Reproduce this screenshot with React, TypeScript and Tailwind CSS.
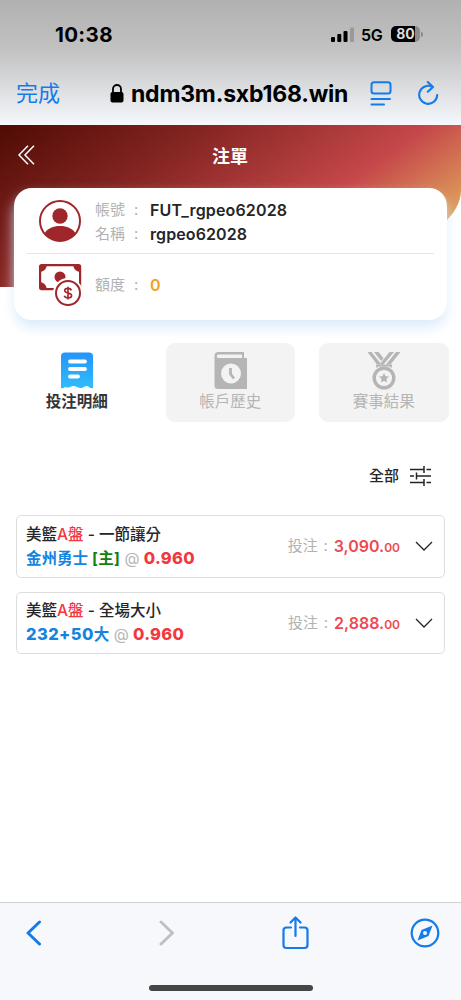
import React from "react";

type Bet = {
  play: string;
  pick: string;
  side?: string;
  home?: boolean;
  odds: string;
  amount: string;
  cents: string;
};

const bets: Bet[] = [
  {
    play: "一節讓分",
    pick: "",
    side: "金州勇士",
    home: true,
    odds: "0.960",
    amount: "3,090.",
    cents: "00",
  },
  {
    play: "全場大小",
    pick: "232+50",
    side: "大",
    odds: "0.960",
    amount: "2,888.",
    cents: "00",
  },
];

const StatusBar = () => (
  <div className="flex h-[68px] items-center justify-between pl-[55px] pr-[38px]">
    <span className="pt-[2px] text-[20.5px] leading-none font-bold tracking-[0.35px]">
      10:38
    </span>
    <div className="flex items-center">
      <svg width="24" height="15" viewBox="0 0 24 15">
        <rect x="0" y="10" width="4" height="5" rx="1" />
        <rect x="6.3" y="7" width="4" height="8" rx="1" />
        <rect x="12.5" y="4" width="4" height="11" rx="1" />
        <rect x="19" y="0.5" width="4" height="14.5" rx="1" fill="#999" />
      </svg>
      <span className="ml-[6px] w-[23px] pt-px text-[16px] leading-none font-semibold tracking-[-0.2px]">
        5G
      </span>
      <div className="ml-[7px] flex h-4 w-[29px] items-center justify-center rounded-[5px] bg-linear-to-r from-black from-82% to-[#8b8b8b] to-82% text-[14px] leading-none font-bold text-[#ddd]">
        80
      </div>
      <div className="ml-px h-[5px] w-[2px] rounded-r bg-[#8b8b8b]" />
    </div>
  </div>
);

const AddressBar = () => (
  <div className="flex h-[57px] items-center pb-[7px] pl-4 text-[#147bea]">
    <span className="w-[94px] text-[22px] leading-none">完成</span>
    <svg width="14" height="19" viewBox="0 0 14 19" className="text-black">
      <rect x="0.5" y="8" width="13" height="10.5" rx="2" fill="currentColor" />
      <path
        d="M3 9V5a4 4 0 0 1 8 0v4"
        fill="none"
        stroke="currentColor"
        strokeWidth="1.8"
      />
    </svg>
    <span className="ml-[7px] w-[218px] pt-[2px] text-[23px] leading-none font-bold tracking-[-0.2px] whitespace-nowrap text-black">
      ndm3m.sxb168.win
    </span>
    <svg
      width="22"
      height="25"
      viewBox="0 0 22 25"
      fill="none"
      stroke="currentColor"
      strokeWidth="2"
      strokeLinecap="round"
      className="ml-[21px]"
    >
      <rect x="1.5" y="1.2" width="19" height="11.3" rx="2.5" />
      <path d="M1.5 18h18.5M1.5 23.5h12.5" />
    </svg>
    <svg
      width="22"
      height="26"
      viewBox="0 0 22 26"
      fill="none"
      stroke="currentColor"
      strokeWidth="2.1"
      strokeLinecap="round"
      strokeLinejoin="round"
      className="ml-[26px]"
    >
      <path d="M14.5 6.9A9 9 0 1 0 19.2 15M9.8 2l5.2 5-5.2 4.7" />
    </svg>
  </div>
);

const UserIcon = () => (
  <svg width="42" height="42" viewBox="0 0 42 42" fill="#9f262a">
    <circle cx="21" cy="21" r="20" fill="none" stroke="#9f262a" strokeWidth="2" />
    <circle cx="21" cy="16" r="7.7" />
    <path d="M5.5 33.5C8 28.5 14 26 21 26s13 2.5 15.5 7.5A20 20 0 0 1 5.5 33.5Z" />
  </svg>
);

const MoneyIcon = () => (
  <svg width="43" height="42" viewBox="0 0 43 42" fill="#9f262a">
    <rect x="1.1" y="1.1" width="40" height="24" rx="1.5" fill="white" stroke="#9f262a" strokeWidth="2.2" />
    <path d="M1 1h7q-1 6-7 7zM41 1h-7q1 6 7 7zM1 25h7q-1-6-7-7z" />
    <circle cx="21" cy="13" r="5.5" />
    <circle cx="29" cy="29" r="15" fill="white" />
    <circle cx="29" cy="29" r="12" fill="white" stroke="#9f262a" strokeWidth="2" />
    <path
      d="M32.5 26.4c-.6-1.4-1.9-2-3.5-2-2 0-3.3.8-3.3 2.200 0 3.300 6.900 1.600 6.900 4.900 0 1.600-1.500 2.400-3.500 2.400-1.900 0-3.300-.7-3.800-2.200M29 22.800v12.800"
      fill="none"
      stroke="#9f262a"
      strokeWidth="1.6"
    />
  </svg>
);

const BetIcon = () => (
  <svg width="34" height="37" viewBox="0 0 34 37">
    <defs>
      <linearGradient id="bet" x1="0" y1="0" x2="0" y2="1">
        <stop offset="0" stopColor="#2494fa" />
        <stop offset="1" stopColor="#30bdfb" />
      </linearGradient>
    </defs>
    <path
      d="M5 .5h24a4 4 0 0 1 4 4V36q-2 1-4-1-2.500-2-5 0-3.500 2-7 0-3.500-2-7 0-2.500 1-5 0-2 2-4 1V4.500a4 4 0 0 1 4-4Z"
      fill="url(#bet)"
    />
    <path
      d="M10 9.5h15M10 17h15M10 24.5h8"
      stroke="white"
      strokeWidth="3.8"
      strokeLinecap="round"
    />
  </svg>
);

const HistoryIcon = () => (
  <svg width="34" height="37" viewBox="0 0 34 37" fill="#b5b5b5">
    <path d="M4.5 0H30v6h3v31H4a3.5 3.5 0 0 1-3.500-3.500V4a4 4 0 0 1 4-4Z" />
    <path d="M4.5 2.5H28V6H4.5a1.7 1.7 0 0 1 0-3.500Z" fill="#f3f3f3" />
    <circle cx="17" cy="21.5" r="10" fill="#f3f3f3" />
    <path d="M16.5 16v6l3.5 4.5" fill="none" stroke="#b5b5b5" strokeWidth="2.8" />
  </svg>
);

const MedalIcon = () => (
  <svg width="34" height="38" viewBox="0 0 34 38" fill="#b5b5b5">
    <path d="M.5 0h4l10 12.500h-4.500ZM7 0h4.500l5 6.300-2.300 2.800ZM29 0h4.500L23.500 12.500h-4.500ZM22.500 0h4.500L16.500 12.500H12.500Z" />
    <path
      d="M10 15.5V13.5h14v2"
      fill="none"
      stroke="#b5b5b5"
      strokeWidth="1.8"
    />
    <circle cx="17" cy="26" r="9.8" fill="none" stroke="#b5b5b5" strokeWidth="3.4" />
    <path d="M17 21l1.500 3.200 3.500.4-2.600 2.400.7 3.500-3.100-1.700-3.100 1.700.7-3.500-2.600-2.400 3.500-.4Z" />
  </svg>
);

const tabs = [
  { label: "投注明細", icon: <BetIcon />, active: true },
  { label: "帳戶歷史", icon: <HistoryIcon />, active: false },
  { label: "賽事結果", icon: <MedalIcon />, active: false },
];

const AccountCard = () => (
  <div className="relative mx-[14px] -mt-[99px] h-[132px] rounded-[18px] bg-white px-[13px] text-[15px] shadow-[0_8px_14px_-1px_#d8eafc]">
    <div className="flex h-[66px] items-center border-b border-[#e4e4e6] pt-px pl-3">
      <UserIcon />
      <div className="ml-[14px] pt-px leading-6 text-[#b2b2b2]">
        <div className="flex">
          <span className="w-[33px]">帳號</span>
          <span className="w-[22px] pl-[6px]">:</span>
          <span className="text-[16px] font-semibold tracking-[0.15px] text-[#252528]">
            FUT_rgpeo62028
          </span>
        </div>
        <div className="flex">
          <span className="w-[33px]">名稱</span>
          <span className="w-[22px] pl-[6px]">:</span>
          <span className="text-[16px] font-semibold tracking-[0.1px] text-[#252528]">
            rgpeo62028
          </span>
        </div>
      </div>
    </div>
    <div className="flex h-[62px] items-center pl-3 text-[#b2b2b2]">
      <MoneyIcon />
      <span className="ml-[13px] w-[33px] pt-px">額度</span>
      <span className="w-[22px] pl-[6px]">:</span>
      <span className="text-[16px] font-semibold text-[#f1a11f]">0</span>
    </div>
  </div>
);

const BetRow = ({ bet }: { bet: Bet }) => (
  <div className="flex h-[62.5px] items-center justify-between rounded-[5px] border border-[#dedee0] pr-[11px] pl-[9px]">
    <div className="pt-px text-[15.5px] leading-6 font-medium whitespace-nowrap text-[#252528]">
      <div>
        美籃<span className="text-[#f2383e]">A盤</span> - {bet.play}
      </div>
      <div className="-mt-px font-bold">
        <span className="text-[16.5px] font-extrabold tracking-[0.4px] text-[#1584df]">
          {bet.pick}
        </span>
        <span className="text-[#1584df]">{bet.side}</span>
        {bet.home && (
          <span className="tracking-[0.3px] text-[#128012]"> [主]</span>
        )}
        <span className="font-normal text-[#b5b5b5]"> @ </span>
        <span className="text-[16.5px] font-extrabold tracking-[0.3px] text-[#f2383e]">
          {bet.odds}
        </span>
      </div>
    </div>
    <div className="flex items-center text-[15px] text-[#b2b2b2]">
      <span>投注</span>
      <span className="w-[16px] text-center">:</span>
      <span className="text-[16px] font-semibold text-[#ee4a4e]">
        {bet.amount}
        <span className="text-[12px]">{bet.cents}</span>
      </span>
      <svg
        width="18"
        height="10"
        viewBox="0 0 18 10"
        fill="none"
        stroke="#252528"
        strokeWidth="1.3"
        className="ml-[15px]"
      >
        <path d="M1 1l8 8 8-8" />
      </svg>
    </div>
  </div>
);

const Toolbar = () => (
  <div className="h-[98px] border-t border-[#cfd1d4] bg-[#f6f8fb] text-[#147bea]">
    <div className="flex h-[60px] items-center pl-[25px]">
      <svg width="17" height="26" viewBox="0 0 17 26" fill="none" stroke="currentColor" strokeWidth="3" strokeLinecap="round" strokeLinejoin="round">
        <path d="M14.5 2L3 13l11.5 11" />
      </svg>
      <svg width="17" height="26" viewBox="0 0 17 26" fill="none" stroke="#bfc0c2" strokeWidth="3" strokeLinecap="round" strokeLinejoin="round" className="ml-[117px]">
        <path d="M2 2l11.5 11L2 24" />
      </svg>
      <svg width="27" height="34" viewBox="0 0 27 34" fill="none" stroke="currentColor" strokeWidth="2.2" strokeLinecap="round" strokeLinejoin="round" className="ml-[106px]">
        <path d="M9 11.5H4.5a3 3 0 0 0-3 3V29a3 3 0 0 0 3 3h18a3 3 0 0 0 3-3V14.5a3 3 0 0 0-3-3H18M13.5 20V2M8.5 6.500l5-5 5 5" />
      </svg>
      <svg width="30" height="30" viewBox="0 0 30 30" fill="none" stroke="currentColor" strokeWidth="2.2" className="ml-[101px]">
        <circle cx="15" cy="15" r="13.3" />
        <path d="M22.5 7.500l-11 4.500-4 10.500 11-4.500Z" fill="currentColor" stroke="none" />
        <circle cx="15" cy="15" r="2" fill="#f6f8fb" stroke="none" />
      </svg>
    </div>
    <div className="mx-auto mt-[22px] h-[6px] w-[164px] rounded-full bg-[#464646]" />
  </div>
);

const App: React.FC = () => {
  return (
    <div className="flex h-[1000px] w-[461px] flex-col overflow-hidden bg-white font-[Inter,'Noto_Sans_CJK_TC',sans-serif]">
      <div className="h-[125px] shrink-0 bg-linear-to-b from-[#b1b1b1] via-[#c2c2c3] via-40% to-[#f5f8fc]">
        <StatusBar />
        <AddressBar />
      </div>

      <div className="flex h-[162px] shrink-0 items-start rounded-br-[286px_97px] bg-[linear-gradient(145deg,#500b04_0%,#842522_30%,#c54749_62%,#dfa05d_84%,#e2ad67_100%)] pt-[18px] text-white">
        <svg
          width="17"
          height="20"
          viewBox="0 0 17 20"
          fill="none"
          stroke="currentColor"
          strokeWidth="1.5"
          className="mt-[2px] ml-[18px]"
        >
          <path d="M10 .8L1 10l9 9.2M16 .8L7 10l9 9.2" />
        </svg>
        <h1 className="mr-[36px] flex-1 pt-px text-center text-[18px] leading-[26px] font-bold">
          注單
        </h1>
      </div>

      <AccountCard />

      <div className="mt-[23px] mr-3 ml-3 flex gap-6">
        {tabs.map((tab) => (
          <div
            key={tab.label}
            className={
              tab.active
                ? "flex h-[79px] w-[129.5px] shrink-0 flex-col items-center pt-[9px] text-[15.5px] leading-[22px] font-bold text-[#353538]"
                : "flex h-[79px] w-[129.5px] shrink-0 flex-col items-center rounded-[9px] bg-[#f3f3f3] pt-[9px] text-[15.5px] leading-[22px] text-[#b5b5b5]"
            }
          >
            <div className="h-[39px] pl-px">{tab.icon}</div>
            {tab.label}
          </div>
        ))}
      </div>

      <div className="mt-[42px] mr-[30px] flex h-6 items-center justify-end text-[15px] font-medium text-[#252528]">
        <span className="pt-px">全部</span>
        <svg
          width="21"
          height="20"
          viewBox="0 0 21 20"
          fill="none"
          stroke="currentColor"
          strokeWidth="1.5"
          className="ml-[11px]"
        >
          <path d="M0 3.5h14M16.5 3.5H21M14 0v7M0 10h4M6.5 10H21M6.5 6.5v7M0 16.5h14M16.5 16.5H21M14 13v7" />
        </svg>
      </div>

      <div className="mt-[27px] mr-4 ml-4 flex flex-1 flex-col gap-[14px]">
        {bets.map((bet) => (
          <BetRow key={bet.play} bet={bet} />
        ))}
      </div>

      <Toolbar />
    </div>
  );
};

export default App;
